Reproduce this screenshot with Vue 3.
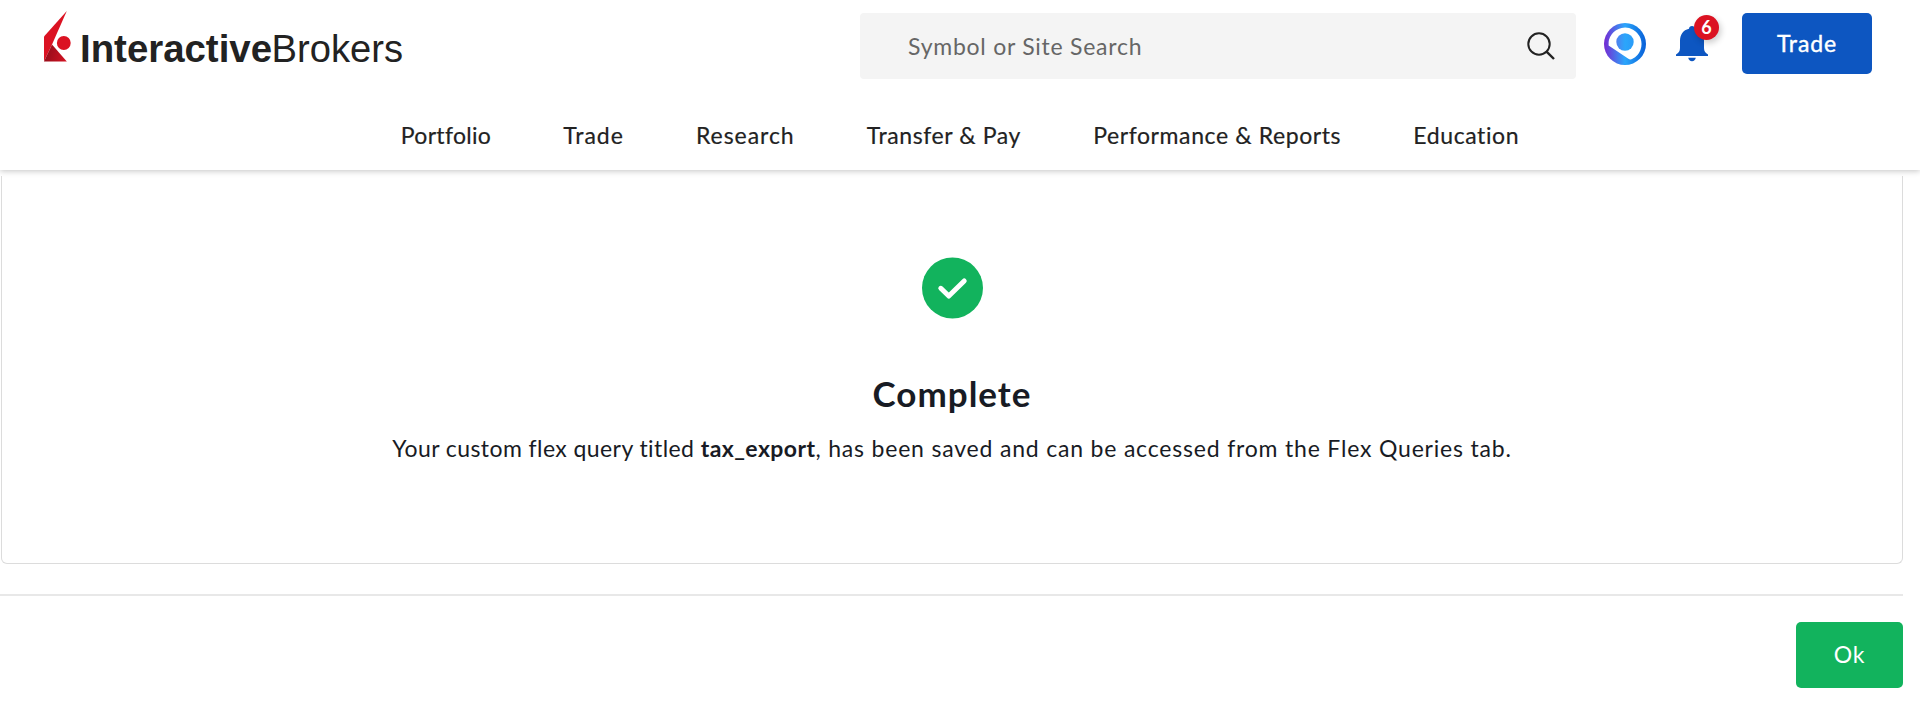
<template>
  <div class="page">
    <header class="header">
      <div class="topbar">
        <a class="logo" aria-label="Interactive Brokers">
          <svg width="380" height="66" viewBox="0 0 380 66">
            <defs>
              <linearGradient id="logoShade" x1="0" y1="0.7" x2="1" y2="0.9">
                <stop offset="0" stop-color="#930d1a" />
                <stop offset="1" stop-color="#d41222" />
              </linearGradient>
            </defs>
            <path d="M22.8 0 L0 25.5 V50.5 L8 33.5 Z" fill="#db1222" />
            <path d="M8 33.5 L0 50.5 H22.8 Z" fill="url(#logoShade)" />
            <circle cx="19.8" cy="32" r="6.9" fill="#db1222" />
            <text class="logo-text logo-bold" x="36" y="50.5" textLength="192" lengthAdjust="spacingAndGlyphs">Interactive</text>
            <text class="logo-text" x="227.5" y="50.5" textLength="131.5" lengthAdjust="spacingAndGlyphs">Brokers</text>
          </svg>
        </a>
        <div class="search">
          <span>Symbol or Site Search</span>
          <svg width="28" height="28" viewBox="0 0 28 28" fill="none" stroke="#222" stroke-width="2">
            <circle cx="12" cy="12" r="10.7" />
            <path d="M19.3 19.3 L27 27" stroke-width="2.4" />
          </svg>
        </div>
        <svg class="assistant" width="42" height="42" viewBox="0 0 42 42">
          <defs>
            <linearGradient id="ring" x1="0" x2="1" y1="0" y2="0">
              <stop offset="0" stop-color="#7629d2" />
              <stop offset="0.5" stop-color="#2ba6fb" />
              <stop offset="1" stop-color="#075fd8" />
            </linearGradient>
            <linearGradient id="dot" x1="0" x2="1" y1="0" y2="0">
              <stop offset="0" stop-color="#5080ee" />
              <stop offset="0.5" stop-color="#2ba6fb" />
              <stop offset="1" stop-color="#2a9bf8" />
            </linearGradient>
          </defs>
          <circle cx="21" cy="21" r="21" fill="url(#ring)" />
          <path d="M4.6 22.5 A16.5 16.5 0 1 1 28.5 35.8 Q26.3 37.2 24 35.6 Z" fill="#fff" />
          <circle cx="21" cy="19" r="8.7" fill="url(#dot)" />
        </svg>
        <div class="alerts">
          <svg width="32" height="36" viewBox="0 0 32 36" fill="#0d56c1">
            <path d="M16 0 C17.8 0 18.8 1 19 2.7 C25 4 28 8.8 28 14.5 V22 C28 25.5 29.5 27 32 28.5 V30 H0 V28.5 C2.5 27 4 25.5 4 22 V14.5 C4 8.8 7 4 13 2.7 C13.2 1 14.2 0 16 0 Z" />
            <path d="M12.2 31.8 H19.8 C19.3 34 18 35.2 16 35.2 C14 35.2 12.7 34 12.2 31.8 Z" />
          </svg>
          <span class="badge">{{ alertCount }}</span>
        </div>
        <button class="btn trade">Trade</button>
      </div>
      <nav class="nav">
        <a v-for="item in menu" :key="item">{{ item }}</a>
      </nav>
    </header>

    <main class="content">
      <section class="card">
        <svg class="check" width="61" height="62" viewBox="0 0 61 62">
          <circle cx="30.5" cy="31" r="30.5" fill="#12b35d" />
          <path d="M18.8 31.3 L26.8 39 L42.2 24" fill="none" stroke="#fff" stroke-width="5" stroke-linecap="round" stroke-linejoin="round" />
        </svg>
        <h1>Complete</h1>
        <p>Your custom flex query titled <strong>{{ queryName }}</strong><span class="status">, has been saved and can be accessed from the Flex Queries tab.</span></p>
      </section>
      <div class="actions">
        <button class="btn ok">Ok</button>
      </div>
    </main>
  </div>
</template>

<script setup>
import { ref } from 'vue'

const menu = ['Portfolio', 'Trade', 'Research', 'Transfer & Pay', 'Performance & Reports', 'Education']
const alertCount = ref(6)
const queryName = ref('tax_export')
</script>

<style>
body {
  margin: 0;
  background: #fff;
}
</style>

<style scoped>
.page {
  height: 716px;
  overflow: hidden;
  font-family: Lato, "Liberation Sans", sans-serif;
  font-size: 23px;
  font-variant-ligatures: none;
  color: #222;
}

.header {
  position: relative;
  height: 170px;
  background: #fff;
  box-shadow: 0 1px 6px rgba(0, 0, 0, 0.24);
}

.topbar {
  display: flex;
  align-items: flex-start;
  height: 100px;
  padding: 13px 48px 0 44px;
  box-sizing: border-box;
}

.logo {
  margin-top: -2px;
  height: 66px;
}

.logo-text {
  font-family: "Liberation Sans", Arial, sans-serif;
  font-size: 39px;
  fill: #222;
}

.logo-bold {
  font-weight: 700;
}

.search {
  display: flex;
  align-items: center;
  justify-content: space-between;
  width: 716px;
  height: 66px;
  margin-left: auto;
  padding: 0 21px 0 48px;
  box-sizing: border-box;
  border-radius: 4px;
  background: #f4f4f4;
  color: #666;
  letter-spacing: 0.75px;
}

.assistant {
  margin: 10px 0 0 28px;
}

.alerts {
  position: relative;
  margin: 13px 0 0 30px;
  height: 36px;
}

.badge {
  position: absolute;
  top: -11px;
  left: 18px;
  width: 25px;
  height: 25px;
  border-radius: 50%;
  background: #db1222;
  box-shadow: 2px 3px 6px rgba(0, 0, 0, 0.2);
  color: #fff;
  font-size: 18px;
  font-weight: 700;
  line-height: 24px;
  text-align: center;
}

.btn {
  border: 0;
  border-radius: 5px;
  color: #fff;
  font-family: inherit;
  font-size: 23px;
}

.trade {
  width: 130px;
  height: 61px;
  margin-left: 34px;
  padding: 0 0 1px;
  background: #0d56c1;
  letter-spacing: 0.9px;
  -webkit-text-stroke: 0.4px #fff;
}

.nav {
  display: flex;
  justify-content: center;
  gap: 72.2px;
  line-height: 30px;
  padding-top: 20px;
  letter-spacing: 0.6px;
  -webkit-text-stroke: 0.2px #222;
}

.nav a:nth-child(1) {
  letter-spacing: 0.3px;
}

.nav a:nth-child(2),
.nav a:nth-child(3) {
  letter-spacing: 0.95px;
}

.content {
  width: 1903px;
  padding-top: 6px;
  color: #181b24;
}

.card {
  display: flex;
  flex-direction: column;
  align-items: center;
  height: 388px;
  margin-left: 1px;
  box-sizing: border-box;
  border: 1px solid #dcdcdc;
  border-top: 0;
  border-radius: 0 0 6px 6px;
}

.check {
  margin-top: 81px;
}

h1 {
  margin: 53px 0 0;
  font-size: 35px;
  font-weight: 700;
  line-height: 42px;
  letter-spacing: 1px;
}

p {
  margin: 19px 0 0;
  line-height: 30px;
  letter-spacing: 0.42px;
  white-space: nowrap;
}

.status {
  letter-spacing: 0.81px;
}

.actions {
  display: flex;
  justify-content: flex-end;
  margin-top: 30px;
  padding-top: 26px;
  border-top: 2px solid #e8e8e8;
}

.ok {
  width: 107px;
  height: 66px;
  padding: 0 0 2px;
  background: #12b35d;
  letter-spacing: 0.8px;
}
</style>
